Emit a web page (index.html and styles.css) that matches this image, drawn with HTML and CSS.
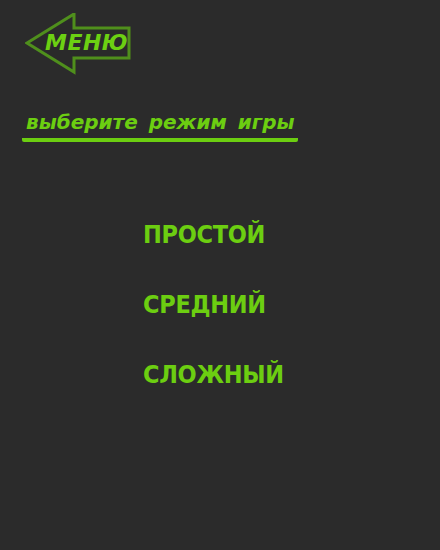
FILE: index.html
```html
<!DOCTYPE html>
<html lang="ru">
<head>
<meta charset="utf-8">
<link rel="stylesheet" href="styles.css">
</head>
<body>
<div class="page">
  <a class="back" href="#">
    <svg class="back-arrow" width="110" height="64" viewBox="0 0 110 64">
      <defs>
        <filter id="blur" x="-10%" y="-10%" width="120%" height="120%">
          <feGaussianBlur stdDeviation="0.6"/>
        </filter>
      </defs>
      <polygon points="2,30 49,1 49,15 104,15 104,45 49,45 49,59" fill="#2b2b2b" stroke="#4f8f1c" stroke-width="3" stroke-linejoin="miter" filter="url(#blur)"/>
    </svg>
    <span class="back-label">МЕНЮ</span>
  </a>
  <h1 class="title">выберите режим игры</h1>
  <ul class="modes">
    <li><a href="#">ПРОСТОЙ</a></li>
    <li><a href="#">СРЕДНИЙ</a></li>
    <li><a href="#">СЛОЖНЫЙ</a></li>
  </ul>
</div>
</body>
</html>
```
FILE: styles.css
```css
html, body {
  margin: 0;
  padding: 0;
  background: #2b2b2b;
  height: 100%;
}
.page {
  width: 440px;
  height: 550px;
  font-family: "DejaVu Sans", sans-serif;
  color: #6cce11;
}
.back {
  position: relative;
  display: block;
  margin: 13px 0 0 25px;
  width: 110px;
  height: 64px;
  text-decoration: none;
}
.back-arrow {
  display: block;
}
.back-label {
  position: absolute;
  left: 20px;
  top: 17px;
  font-size: 22px;
  font-weight: bold;
  font-style: italic;
  color: #6cd012;
  letter-spacing: 0.5px;
}
.title {
  margin: 33px 0 0 22px;
  display: inline-block;
  padding: 0 3px 3px 4px;
  font-size: 20px;
  font-weight: bold;
  font-style: italic;
  line-height: 25px;
  border-bottom: 4px solid #6cce11;
  border-radius: 2px;
  color: #6cce11;
  word-spacing: 4px;
}
.modes {
  list-style: none;
  margin: 78px 0 0 143px;
  padding: 0;
  display: flex;
  flex-direction: column;
  gap: 40px;
}
.modes li {
  line-height: 30px;
  height: 30px;
}
.modes a {
  color: #6cce11;
  text-decoration: none;
  font-family: "DejaVu Sans Condensed", "DejaVu Sans", sans-serif;
  font-stretch: condensed;
  font-size: 25px;
  font-weight: bold;
  letter-spacing: -0.3px;
}
```
